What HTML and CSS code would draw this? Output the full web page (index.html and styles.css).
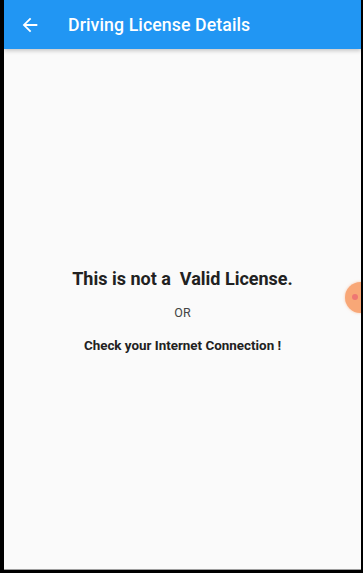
FILE: index.html
```html
<!DOCTYPE html>
<html lang="en">
<head>
  <meta charset="UTF-8">
  <title>Driving License Details</title>
  <link rel="stylesheet" href="styles.css">
</head>
<body>
  <div class="screen">
    <header class="app-bar">
      <button class="back-btn" aria-label="Back">
        <svg width="22" height="22" viewBox="0 0 24 24">
          <path d="M20 11H7.83l5.59-5.59L12 4l-8 8 8 8 1.41-1.41L7.83 13H20v-2z" fill="#fff"/>
        </svg>
      </button>
      <h1 class="title">Driving License Details</h1>
    </header>
    <main class="content">
      <p class="msg-main">This is not a&nbsp; Valid License.</p>
      <p class="msg-or">OR</p>
      <p class="msg-sub">Check your Internet Connection !</p>
    </main>
    <!-- floating bubble on the edge -->
    <div class="bubble"><span class="dot"></span></div>
  </div>
</body>
</html>
```

FILE: styles.css
```css
html, body { margin: 0; height: 100%; }
body { background: #000; font-family: Roboto, "Noto Sans", Arial, sans-serif; overflow: hidden; }
.screen {
  position: relative;
  margin: 0 2px 0 4px;
  height: 569px;
  background: #fafafa;
  border-bottom: 1px solid #9e9e9e;
  display: flex;
  flex-direction: column;
  overflow: hidden;
}
.app-bar {
  height: 49px;
  padding-top: 1px;
  box-sizing: border-box;
  background: #2196f3;
  display: flex;
  align-items: center;
  box-shadow: 0 2px 4px #0003;
  flex-shrink: 0;
}
.back-btn {
  width: 36px;
  height: 36px;
  margin-left: 8px;
  border: none;
  background: none;
  padding: 0;
  display: flex;
  align-items: center;
  justify-content: center;
}
.title {
  margin: 0 0 0 20px;
  color: #fff;
  font-size: 17.7px;
  font-weight: 500;
  letter-spacing: 0.1px;
}
.content {
  flex: 1;
  display: flex;
  flex-direction: column;
  align-items: center;
  justify-content: center;
  padding-top: 3px;
}
.content p { margin: 0; text-align: center; }
.msg-main { font-size: 18px; font-weight: 700; color: #212121; }
.msg-or { font-size: 12.5px; color: #444; margin-top: 16px !important; }
.msg-sub { font-size: 13.4px; font-weight: 700; color: #212121; margin-top: 18px !important; }
.bubble {
  position: absolute;
  left: 341px;
  top: 282px;
  width: 31px;
  height: 31px;
  border-radius: 50%;
  background: #f8a777;
  box-shadow: 0 0 3px #f8a77799;
}
.dot {
  position: absolute;
  left: 7px;
  top: 12px;
  width: 6px;
  height: 6px;
  border-radius: 50%;
  background: #ee7773;
}
```
